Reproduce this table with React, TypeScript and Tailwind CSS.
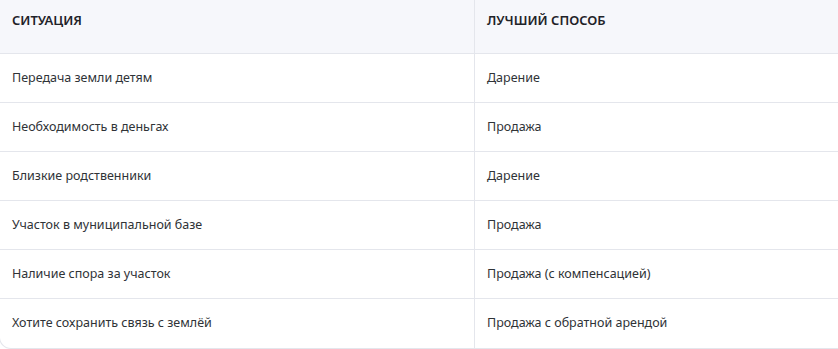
const rows: [string, string][] = [
  ["Передача земли детям", "Дарение"],
  ["Необходимость в деньгах", "Продажа"],
  ["Близкие родственники", "Дарение"],
  ["Участок в муниципальной базе", "Продажа"],
  ["Наличие спора за участок", "Продажа (с компенсацией)"],
  ["Хотите сохранить связь с землёй", "Продажа с обратной арендой"],
];

const App = () => {
  return (
    <div className="w-[838px] h-[349px] overflow-hidden bg-white font-['Noto_Sans',sans-serif]">
      <div className="-ml-px w-[860px] border border-t-0 border-[#e4e6ec] rounded-bl-xl overflow-hidden">
        <div className="flex h-[54px] bg-[#f6f7fb] border-b border-[#e4e6ec] text-[13px] font-semibold text-[#1f2329] uppercase">
          <div className="w-[475px] pl-[12px] pt-[11px] border-r border-[#e4e6ec]">Ситуация</div>
          <div className="flex-1 pl-[12px] pt-[11px]">Лучший способ</div>
        </div>
        {rows.map(([situation, method], i) => (
          <div
            key={situation}
            className={`flex h-[49px] text-[12.5px] text-[#2f3337] ${i < rows.length - 1 ? "border-b border-[#e4e6ec]" : ""}`}
          >
            <div className="w-[475px] pl-[12px] flex items-center border-r border-[#e4e6ec]">{situation}</div>
            <div className="flex-1 pl-[12px] flex items-center">{method}</div>
          </div>
        ))}
      </div>
    </div>
  );
};

export default App;
